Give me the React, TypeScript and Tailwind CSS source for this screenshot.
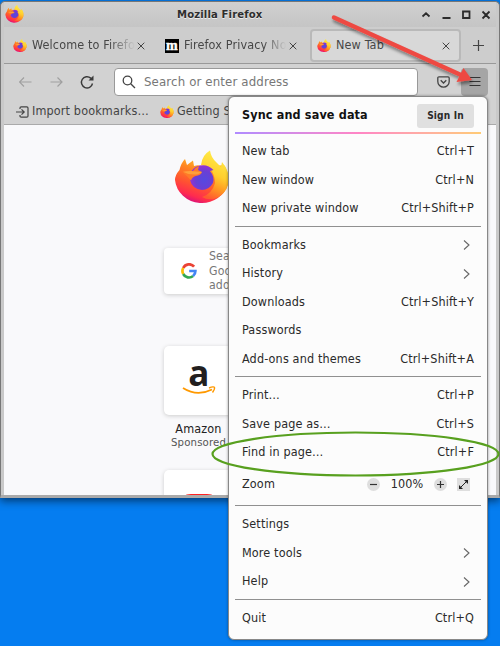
import type { ReactNode } from "react";

function Firefox({ size, className = "" }: { size: number; className?: string }) {
  return (
    <svg width={size} height={size} viewBox="0 0 56 56" className={"shrink-0 overflow-visible " + className}>
      <defs>
        <linearGradient id="flame" x1="0.75" y1="0.1" x2="0.35" y2="1">
          <stop offset="0" stopColor="#ffc22b" />
          <stop offset="0.3" stopColor="#ff8422" />
          <stop offset="0.6" stopColor="#ff5430" />
          <stop offset="0.85" stopColor="#ff2b4f" />
          <stop offset="1" stopColor="#d8107c" />
        </linearGradient>
        <linearGradient id="tail" x1="0.65" y1="0" x2="0.4" y2="1">
          <stop offset="0" stopColor="#fff04a" />
          <stop offset="0.5" stopColor="#ffce2e" />
          <stop offset="0.75" stopColor="#ff9a22" />
          <stop offset="1" stopColor="#ff5a30" />
        </linearGradient>
        <radialGradient id="globe" cx="0.6" cy="0.6" r="0.65">
          <stop offset="0" stopColor="#5549e0" />
          <stop offset="0.55" stopColor="#6a3fd4" />
          <stop offset="1" stopColor="#a02fd0" />
        </radialGradient>
      </defs>
      <path d="M5.500 19Q7 12 11 8L13 14 19 9.500 20 15Q25 13 31 16L50 14Q56 24 54 33A27 25.500 0 0 1 1 29Q1 24 5.500 19Z" fill="url(#flame)" />
      <path d="M27 14Q28 4 36-.5 37 7 43 12L47 16 48 11Q56 20 54.500 32 52 44 40 48 33 49 28 46 38 43 41 32 41 24 36 17Z" fill="url(#tail)" />
      <path d="M16 29Q15 17 26 14.500 34 13 39.500 19L36 20Q41 26 39 32 35 39 28 39 18 38 16 29Z" fill="url(#globe)" />
      <path d="M8.500 21Q13 19.500 19 20 21 16.500 25 15L24 19 28 21Q27 24.500 21.500 25 18 26 17 29.500 14 26 8.500 21Z" fill="#ff7a28" />
      <path d="M9 20.800Q14 19.800 19 20.200L28 21 24 23.300Q15 24.500 9 20.800Z" fill="#ffa03a" />
    </svg>
  );
}

function Close({ className = "" }: { className?: string }) {
  return (
    <svg width="8" height="8" viewBox="0 0 8 8" className={"shrink-0 " + className} stroke="#444" strokeWidth="1" fill="none">
      <path d="M.7.7l6.6 6.6M7.3.7.7 7.3" />
    </svg>
  );
}

function TitleBar() {
  return (
    <div className="flex h-[25px] shrink-0 items-center bg-linear-to-b from-[#d0d0d0] to-[#c5c5c5] pl-px pr-[5px]">
      <Firefox size={19} />
      <div className="ml-[153px] whitespace-nowrap pt-[2px] text-[11.2px] font-bold text-[#2e2e2e] [text-shadow:0_1px_0_#eee]">
        Mozilla Firefox
      </div>
      <svg width="70" height="12" viewBox="0 0 70 12" className="ml-auto mt-px" fill="none" stroke="#2b2b2b" strokeWidth="1.8">
        <path d="M1.500 7.500 5 4.300 8.500 7.500M21.500 9h8M42 2.500h6.500v6.500H42zM61.500 2.500l7 7M68.500 2.500l-7 7" />
      </svg>
    </div>
  );
}

function Tabs() {
  return (
    <div className="flex h-[37px] shrink-0 items-center border-b border-[#999] bg-[#cdcdcd] text-[12.5px] text-[#474747]">
      <div className="flex w-[152px] items-center pl-[9px] pt-px">
        <Firefox size={14} />
        <span className="ml-[5px] w-[103px] overflow-hidden whitespace-nowrap [mask-image:linear-gradient(to_right,#000_75%,transparent)]">Welcome to Firefox</span>
        <Close className="ml-[2px]" />
      </div>
      <div className="flex w-[154px] items-center pl-[9px] pt-px">
        <svg width="14" height="14" viewBox="0 0 14 14" className="shrink-0">
          <rect width="14" height="14" fill="#000" />
          <text x="7" y="10.500" textAnchor="middle" fontFamily="Liberation Serif, serif" fontWeight="bold" fontSize="14" stroke="#fff" strokeWidth=".4" fill="#fff">m</text>
        </svg>
        <span className="ml-[5px] w-[102px] overflow-hidden whitespace-nowrap [mask-image:linear-gradient(to_right,#000_78%,transparent)]">Firefox Privacy Notice</span>
        <Close className="ml-[3px]" />
      </div>
      <div className="flex h-[33px] w-[151px] items-center rounded-[4px] border-2 border-[#b9b9b9] bg-[#d8d8d8] pl-[5px] pr-[9px] pt-px">
        <Firefox size={14} />
        <span className="ml-[5px]">New Tab</span>
        <Close className="ml-auto" />
      </div>
      <svg width="11" height="11" viewBox="0 0 11 11" className="ml-[12px] mt-px" stroke="#444" strokeWidth="1.200">
        <path d="M5.500 0v11M0 5.500h11" />
      </svg>
    </div>
  );
}

function NavBar() {
  return (
    <div className="flex h-[35px] shrink-0 items-center bg-[#d2d2d2] pl-[15px] pr-[8px]">
      <svg width="76" height="16" viewBox="0 0 76 16" fill="none" strokeWidth="1.200" className="shrink-0">
        <path d="M12.500 8H.500M5 3.500.500 8 5 12.500M31.500 8h11.500M38.500 3.500 43 8l-4.500 4.500" stroke="#a0a0a0" />
        <path d="M73.500 9.500a5.600 5.600 0 1 1-1.800-5.400l1.800 1.700" stroke="#3a3a3a" strokeWidth="1.400" />
        <path d="M74.500 1.500v5h-5z" fill="#3a3a3a" />
      </svg>
      <div className="ml-[19px] flex h-[28px] w-[304px] items-center rounded-[4px] border border-[#999] bg-white pl-[7px]">
        <svg width="14" height="14" viewBox="0 0 14 14" fill="none" stroke="#444" strokeWidth="1.300">
          <circle cx="5.500" cy="5.500" r="4.300" />
          <path d="m8.700 8.700 4.300 4.300" />
        </svg>
        <span className="ml-[8px] whitespace-nowrap text-[13.1px] text-[#777]">Search or enter address</span>
      </div>
      <svg width="13" height="12" viewBox="0 0 13 12" fill="none" stroke="#444" strokeWidth="1.300" className="ml-auto">
        <path d="M2 .8h9q1.200 0 1.200 1.200v3.500a5.700 5.700 0 0 1-11.400 0V2Q.8.8 2 .8zM3.700 4.300l2.800 2.700 2.800-2.700" />
      </svg>
      <div className="ml-[11px] flex h-[28px] w-[27px] items-center justify-center rounded-[4px] bg-[#a5a5a5]">
        <svg width="12" height="10" viewBox="0 0 12 10" stroke="#333" strokeWidth="1">
          <path d="M.500.500h11M.500 4.500h11M.500 8.500h11" />
        </svg>
      </div>
    </div>
  );
}

function BookmarksBar() {
  return (
    <div className="flex h-[26px] shrink-0 items-center whitespace-nowrap border-b border-[#aaa] bg-[#d2d2d2] pl-[12px] text-[12.5px] text-[#444]">
      <svg width="13" height="12" viewBox="0 0 13 12" fill="none" stroke="#444" strokeWidth="1.200" className="shrink-0">
        <path d="M0 6h8M5.500 3.300 8.200 6 5.500 8.700M4 3V2Q4 .8 5.200.8h5.600Q12 .8 12 2v8q0 1.200-1.200 1.200H5.200Q4 11.200 4 10V9" />
      </svg>
      <span className="ml-[3px] w-[119px]">Import bookmarks…</span>
      <Firefox size={14} className="ml-[9px]" />
      <span className="ml-[3px]">Getting Started</span>
    </div>
  );
}

function NewTabPage() {
  return (
    <div className="flex min-h-0 flex-1 flex-col overflow-hidden bg-[#f9f9fb] pl-[160px]">
      <Firefox size={56} className="ml-[10px] mt-[26px]" />
      <div className="mt-[41px] flex h-[46px] w-[300px] shrink-0 items-center rounded-[4px] bg-white pl-[17px] shadow-[0_1px_4px_#ccc]">
        <svg width="16" height="16" viewBox="0 0 16 16" fill="none" strokeWidth="2.700" className="shrink-0">
          <path d="M13.100 3.700A6.500 6.500 0 0 0 2.200 5" stroke="#ea4335" />
          <path d="M2.200 5a6.500 6.500 0 0 0 0 6" stroke="#fbbc05" />
          <path d="M2.200 11a6.500 6.500 0 0 0 9.900 2" stroke="#34a853" />
          <path d="M12.100 13a6.500 6.500 0 0 0 2.300-5H8.200" stroke="#4285f4" />
        </svg>
        <div className="ml-[12px] w-[60px] text-[12.2px] leading-[14.500px] text-[#777]">Search Google or address</div>
      </div>
      <div className="mt-[52px] flex h-[69px] w-[69px] shrink-0 items-center justify-center rounded-[5px] bg-white shadow-[0_1px_4px_#ccc]">
        <svg width="34" height="34" viewBox="0 0 34 34">
          <text x="17" y="22" textAnchor="middle" fontFamily="Open Sans, sans-serif" fontWeight="bold" fontSize="35" fill="#221f1f">a</text>
          <path d="M1 24q14 9 29 1.500" fill="none" stroke="#ff9900" strokeWidth="1.800" />
          <path d="M27 24q5-2 5.500-.5t-2 5" fill="none" stroke="#ff9900" strokeWidth="1.400" />
        </svg>
      </div>
      <div className="mt-[6px] flex w-[69px] shrink-0 flex-col items-center">
        <span className="text-[12.5px] leading-[15px] text-[#222]">Amazon</span>
        <span className="text-[11.3px] leading-[14px] text-[#555]">Sponsored</span>
      </div>
      <div className="mt-[20px] flex h-[69px] w-[69px] shrink-0 justify-center rounded-[5px] bg-white pt-[24px] shadow-[0_1px_4px_#ccc]">
        <div className="h-5 w-[28px] rounded-[6px_6px_4px_4px/2px_2px_4px_4px] bg-[#f22]" />
      </div>
    </div>
  );
}

function Row({ label, keys, sub }: { label: string; keys?: string; sub?: boolean }) {
  return (
    <div className="flex h-[28.5px] items-center justify-between px-[13px] pt-px">
      <span>{label}</span>
      {keys && <span>{keys}</span>}
      {sub && (
        <svg width="7" height="10" viewBox="0 0 7 10" fill="none" stroke="#666" strokeWidth="1.100" className="mr-[4px]">
          <path d="M1 .500 6 5 1 9.500" />
        </svg>
      )}
    </div>
  );
}

function Separator() {
  return (
    <div className="flex h-2 items-center px-[6px]">
      <div className="h-px w-full bg-[#909090]" />
    </div>
  );
}

function Round({ children }: { children: ReactNode }) {
  return (
    <span className="flex size-[13px] items-center justify-center rounded-full bg-[#dedede]">
      <svg width="7" height="7" viewBox="0 0 7 7" stroke="#333" strokeWidth="1.200">{children}</svg>
    </span>
  );
}

function Menu() {
  return (
    <div className="absolute left-[228px] top-[96px] h-[544px] w-[260px] whitespace-nowrap rounded-[6px] border border-[#888] bg-[#fcfcfc] text-[12.5px] text-[#2a2a2a] shadow-[0_0_3px_#0006]">
      <div className="flex h-[35px] items-center justify-between px-[13px] pt-[2px]">
        <span className="font-bold text-[#111]">Sync and save data</span>
        <span className="flex h-[24px] w-[57px] items-center justify-center rounded-[3px] bg-[#e0e0e0] text-[10.1px] font-bold">Sign In</span>
      </div>
      <div className="mx-[6px] mb-[3.300px] h-[1.500px] bg-linear-to-r from-[#b08bff] via-[#ff85c5] to-[#ffcb75]" />
      <Row label="New tab" keys="Ctrl+T" />
      <Row label="New window" keys="Ctrl+N" />
      <Row label="New private window" keys="Ctrl+Shift+P" />
      <Separator />
      <Row label="Bookmarks" sub />
      <Row label="History" sub />
      <Row label="Downloads" keys="Ctrl+Shift+Y" />
      <Row label="Passwords" />
      <Row label="Add-ons and themes" keys="Ctrl+Shift+A" />
      <Separator />
      <Row label="Print…" keys="Ctrl+P" />
      <Row label="Save page as…" keys="Ctrl+S" />
      <Row label="Find in page…" keys="Ctrl+F" />
      <div className="flex h-[35.500px] items-center pl-[13px] pr-[17px] pt-px">
        <span>Zoom</span>
        <span className="ml-auto" />
        <Round><path d="M0 3.500h7" /></Round>
        <span className="w-[54px] text-center">100%</span>
        <Round><path d="M0 3.500h7M3.500 0v7" /></Round>
        <span className="ml-[10px] flex size-[13px] items-center justify-center bg-[#dedede]">
          <svg width="11" height="11" viewBox="0 0 11 11" fill="#222" stroke="#222">
            <path d="m2 9 7-7" /><path d="M6 1H10v4zM1 6V10h4z" stroke="none" />
          </svg>
        </span>
      </div>
      <Separator />
      <Row label="Settings" />
      <Row label="More tools" sub />
      <Row label="Help" sub />
      <Separator />
      <Row label="Quit" keys="Ctrl+Q" />
    </div>
  );
}

export default function App() {
  return (
    <div className="relative h-[646px] w-[500px] overflow-hidden bg-[#057df0] pt-px font-['DejaVu_Sans_Condensed','DejaVu_Sans',sans-serif] tracking-[0.14px]">
      <div className="flex h-[497px] w-[500px] flex-col overflow-hidden rounded-t-[5px] border-x border-b-[3px] border-t border-[#777] border-b-[#aaa] bg-[#c9c9c9] pl-[3px] pr-[3px] shadow-[0_3px_8px_#0008]">
        <TitleBar />
        <Tabs />
        <NavBar />
        <BookmarksBar />
        <NewTabPage />
      </div>
      <Menu />
      <svg width="500" height="646" viewBox="0 0 500 646" className="pointer-events-none absolute inset-0" fill="none">
        <defs>
          <filter id="arrowShadow" x="-10%" y="-10%" width="120%" height="130%">
            <feDropShadow dx="1" dy="3" stdDeviation="1.500" floodOpacity="0.4" />
          </filter>
        </defs>
        <g filter="url(#arrowShadow)">
          <path d="M334 17.500 461 75" stroke="#ee4a43" strokeWidth="4.500" strokeLinecap="round" />
          <path d="m472 80-15.500 2 7-14z" fill="#ee4a43" />
        </g>
        <ellipse cx="355.500" cy="454" rx="143" ry="21.500" stroke="#58a01f" strokeWidth="2.200" />
      </svg>
    </div>
  );
}
